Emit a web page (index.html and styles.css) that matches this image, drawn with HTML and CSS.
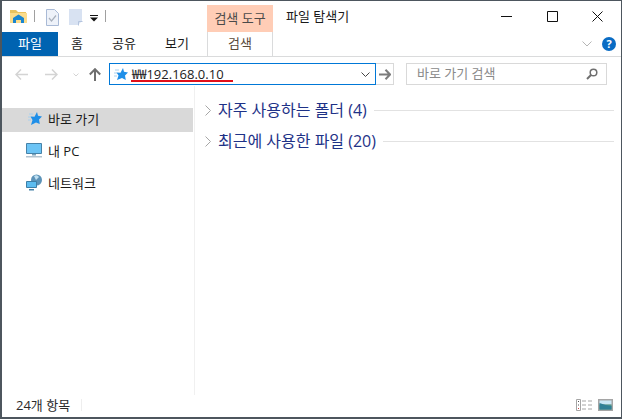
FILE: index.html
```html
<!DOCTYPE html>
<html lang="ko">

<head>
    <meta charset="utf-8">
    <title>파일 탐색기</title>
    <link rel="stylesheet" href="styles.css">
</head>

<body>
    <div class="window">

        <header class="titlebar">
            <div class="quick">
                <svg class="ico-folder" width="17" height="15" viewBox="0 0 17 15">
                    <path d="M0 1h6l2 2h8v2H0z" fill="#e8c25e" />
                    <path d="M0 4h17v10H0z" fill="#fbdc8c" />
                    <path d="M3 14V9l5.500-3.500L14 9v5h-3v-3H6v3z" fill="#1a86d0" />
                </svg>
                <span class="qsep sep-a"></span>
                <svg class="ico-doc" width="13" height="17" viewBox="0 0 13 17">
                    <path d="M.5.500h8l4 4v12H.5z" fill="#eef2f9" stroke="#a9bad6" />
                    <path d="M3 9l2.500 3L10 6.500" fill="none" stroke="#a8b0bc" stroke-width="1.200" />
                </svg>
                <svg class="ico-blank" width="14" height="17" viewBox="0 0 14 17">
                    <path d="M0 0h13v12l-4 4H0z" fill="#d8e2f2" />
                    <path d="M9.500 16.500v-4h4" fill="none" stroke="#b4c4de" />
                </svg>
                <svg class="ico-drop" width="8" height="7" viewBox="0 0 8 7">
                    <path d="M0 0h8v1H0zM0 2.500h8L4 6.500z" fill="#111" />
                </svg>
                <span class="qsep sep-b"></span>
            </div>
            <div class="ctx-title">검색 도구</div>
            <div class="app-title">파일 탐색기</div>
            <div class="winbtns">
                <svg width="11" height="11" viewBox="0 0 11 11">
                    <path d="M0 5.500h11" stroke="#111" />
                </svg>
                <svg width="11" height="11" viewBox="0 0 11 11">
                    <path d="M.5.500h10v10H.5z" fill="none" stroke="#111" />
                </svg>
                <svg width="11" height="11" viewBox="0 0 11 11">
                    <path d="M.5.500l10 10M10.500.500l-10 10" stroke="#111" />
                </svg>
            </div>
        </header>

        <nav class="tabs">
            <div class="tab tab-file">파일</div>
            <div class="tab tab-home">홈</div>
            <div class="tab tab-share">공유</div>
            <div class="tab tab-view">보기</div>
            <div class="tab tab-search">검색</div>
            <svg class="ico-collapse" width="10" height="6" viewBox="0 0 10 6">
                <path d="M.5.500L5 5 9.500.500" fill="none" stroke="#b5b5b5" />
            </svg>
            <div class="help">?</div>
        </nav>

        <section class="addressbar">
            <svg class="nav-arrow" width="13" height="11" viewBox="0 0 13 11">
                <path d="M6 .500L1 5.500l5 5M1 5.500h12" fill="none" stroke="#d4d4d4" stroke-width="1.500" />
            </svg>
            <svg class="nav-arrow arrow-fwd" width="13" height="11" viewBox="0 0 13 11">
                <path d="M7 .500l5 5-5 5M12 5.500H0" fill="none" stroke="#d4d4d4" stroke-width="1.500" />
            </svg>
            <svg class="nav-recent" width="6" height="4" viewBox="0 0 6 4">
                <path d="M.5.500L3 3 5.500.500" fill="none" stroke="#d4d4d4" />
            </svg>
            <svg class="nav-up" width="12" height="13" viewBox="0 0 12 13">
                <path d="M.8 6.500L6 1.200l5.200 5.300M6 1.500V13" fill="none" stroke="#6f6f6f" stroke-width="2" />
            </svg>

            <div class="addr">
                <svg class="star" width="14" height="12" viewBox="0 0 14 12">
                    <path d="M9 0l1 3.800 4 .7-3 3 .8 4.500L8 10l-5 2 1.500-4.500L2.500 4.500l4 .2z" fill="#1f8fe8" />
                    <path d="M1 2h4M0 5h3M0 8h3" stroke="#a8d0ee" />
                </svg>
                <span class="addr-text">₩₩192.168.0.10</span>
                <span class="redline"></span>
                <svg class="addr-drop" width="9" height="5" viewBox="0 0 9 5">
                    <path d="M.5.500l4 4 4-4" fill="none" stroke="#444" />
                </svg>
            </div>
            <div class="go">
                <svg width="12" height="11" viewBox="0 0 12 11">
                    <path d="M6.500.800l4.500 4.700-4.500 4.700M11 5.500H0" fill="none" stroke="#7c7c7c" stroke-width="2" />
                </svg>
            </div>
            <div class="searchbox">
                <span class="placeholder">바로 가기 검색</span>
                <svg width="12" height="12" viewBox="0 0 12 12">
                    <circle cx="7.500" cy="4.500" r="3.300" fill="none" stroke="#6f6f6f" stroke-width="1.500" />
                    <path d="M5 7L1 11" stroke="#6f6f6f" stroke-width="2" />
                </svg>
            </div>
        </section>

        <main class="content">
            <aside class="sidebar">
                <div class="side-item active">
                    <svg class="side-ico" width="16" height="13" viewBox="0 0 16 13">
                        <path d="M11 0l1 3.800 4 .7-3 3 .8 4.500L10 10.500l-5 2.500 1.500-5L4.500 4.500l4 .2z" fill="#1f8fe8" />
                        <path d="M3 2h4M2 5h3M2 8h3" stroke="#a8d0ee" />
                    </svg>
                    <span>바로 가기</span>
                </div>
                <div class="side-item">
                    <svg class="side-ico" width="16" height="15" viewBox="0 0 16 15">
                        <path d="M.5.500h15v10H.5z" fill="#6cc4f5" stroke="#4682a8" />
                        <path d="M6 11h4v1.500H6z" fill="#7da3bb" />
                        <path d="M0 13h16v1.500H0z" fill="#b3c3cf" />
                    </svg>
                    <span>내 PC</span>
                </div>
                <div class="side-item">
                    <svg class="side-ico" width="16" height="17" viewBox="0 0 16 17">
                        <circle cx="10.500" cy="6" r="5.500" fill="#5c93b8" />
                        <path d="M8 2q3-2 5 1l-3 3z" fill="#bfe0f2" />
                        <path d="M.5 7.500h10v6H.5z" fill="#5cbcf0" stroke="#3d7ea6" />
                        <path d="M3 15h5v1.500H3z" fill="#4682a8" />
                    </svg>
                    <span>네트워크</span>
                </div>
            </aside>

            <div class="groups">
                <div class="group">
                    <svg width="6" height="11" viewBox="0 0 6 11">
                        <path d="M.5.500l5 5-5 5" fill="none" stroke="#a6a6a6" />
                    </svg>
                    <span class="group-name">자주 사용하는 폴더 (4)</span>
                    <span class="group-line"></span>
                </div>
                <div class="group">
                    <svg width="6" height="11" viewBox="0 0 6 11">
                        <path d="M.5.500l5 5-5 5" fill="none" stroke="#a6a6a6" />
                    </svg>
                    <span class="group-name">최근에 사용한 파일 (20)</span>
                    <span class="group-line"></span>
                </div>
            </div>
        </main>

        <footer class="statusbar">
            <span class="count">24개 항목</span>
            <span class="status-sep"></span>
            <svg class="view-details" width="16" height="12" viewBox="0 0 16 12">
                <path d="M.5.500h4v11h-4z" fill="#fff" stroke="#a5a5a5" />
                <path d="M2 2h1v1H2zM2 5.500h1v1H2z" fill="#555" />
                <path d="M2 9h1v1H2z" fill="#c44" />
                <path d="M6 2h4M12 2h4M6 6h4M12 6h4M6 10h4M12 10h4" stroke="#a5a5a5" />
            </svg>
            <svg class="view-thumb" width="15" height="12" viewBox="0 0 15 12">
                <path d="M0 0h15v12H0z" fill="#a5a5a5" />
                <path d="M1.500 1.500h12v4h-12z" fill="#c9e6f5" />
                <path d="M1.500 5.500h12v5h-12z" fill="#4f9a8c" />
                <path d="M1.500 4l6 2 6 1v3.500h-12z" fill="#2f7f95" />
            </svg>
        </footer>

    </div>
</body>

</html>
```

FILE: styles.css
```css
* {
    box-sizing: border-box;
}

html,
body {
    margin: 0;
    padding: 0;
}

body {
    background-color: #fff;
    font-family: 'Open Sans', 'Noto Sans CJK KR', sans-serif;
    font-size: 13px;
    color: #1a1a1a;
}

svg {
    display: block;
    flex: none;
}

.window {
    width: 622px;
    height: 419px;
    border: 1px solid #4d565e;
    border-width: 1px 1px 2px 2px;
    background-color: #fff;
    display: flex;
    flex-direction: column;
    overflow: hidden;
}

/* title row */

.titlebar {
    height: 31px;
    display: flex;
    align-items: flex-start;
    flex: none;
}

.quick {
    width: 205px;
    display: flex;
    align-items: flex-start;
    flex: none;
}

.ico-folder {
    margin: 8px 0 0 8px;
}

.qsep {
    width: 1px;
    height: 12px;
    margin-top: 9px;
    background-color: #a0a0a0;
}

.sep-a {
    margin-left: 7px;
}

.sep-b {
    margin-left: 7px;
}

.ico-doc {
    margin: 8px 0 0 11px;
}

.ico-blank {
    margin: 8px 0 0 10px;
}

.ico-drop {
    margin: 14px 0 0 7px;
}

.ctx-title {
    width: 66px;
    height: 27px;
    margin-top: 4px;
    background-color: #ffcdb6;
    color: #4a4a4a;
    text-align: center;
    line-height: 27px;
    flex: none;
}

.app-title {
    margin-left: 13px;
    margin-top: 6px;
    line-height: 18px;
    flex: 1;
}

.winbtns {
    width: 102px;
    margin-right: 18px;
    margin-top: 10px;
    display: flex;
    justify-content: space-between;
    flex: none;
}

/* ribbon tabs */

.tabs {
    display: flex;
    align-items: center;
    border-bottom: 1px solid #dadbdc;
    flex: none;
    height: 25px;
}

.tab {
    text-align: center;
    line-height: 23px;
    height: 24px;
}

.tab-file {
    width: 56px;
    background-color: #0063b1;
    color: #fff;
}

.tab-home {
    width: 38px;
}

.tab-share {
    width: 56px;
}

.tab-view {
    width: 50px;
}

.tab-search {
    width: 66px;
    margin-left: 5px;
    color: #5a4a3a;
    border: 1px solid #dadbdc;
    border-width: 0 1px;
}

.ico-collapse {
    margin-left: 309px;
}

.help {
    width: 14px;
    height: 14px;
    margin-left: 10px;
    border-radius: 50%;
    background-color: #0a6cc4;
    color: #fff;
    font-size: 11px;
    font-weight: bold;
    line-height: 14px;
    text-align: center;
}

/* address row */

.addressbar {
    height: 29px;
    padding-top: 6px;
    display: flex;
    align-items: flex-start;
    flex: none;
}

.nav-arrow {
    margin: 6px 0 0 13px;
}

.arrow-fwd {
    margin-left: 17px;
}

.nav-recent {
    margin: 10px 0 0 15px;
}

.nav-up {
    margin: 5px 0 0 10px;
}

.addr {
    position: relative;
    width: 267px;
    height: 22px;
    margin-left: 8px;
    padding-left: 4px;
    border: 1px solid #0078d7;
    display: flex;
    align-items: center;
    flex: none;
}

.addr-text {
    margin-left: 4px;
    line-height: 20px;
    color: #222;
}

.redline {
    position: absolute;
    left: 21px;
    top: 16px;
    width: 102px;
    height: 2px;
    background-color: #e0101a;
}

.addr-drop {
    margin-left: auto;
    margin-right: 5px;
}

.go {
    width: 18px;
    height: 22px;
    border: 1px solid #d9d9d9;
    border-left: 0;
    display: flex;
    align-items: center;
    justify-content: center;
    flex: none;
}

.searchbox {
    width: 201px;
    height: 22px;
    margin-left: 12px;
    padding: 0 8px 0 10px;
    border: 1px solid #d9d9d9;
    display: flex;
    align-items: center;
    justify-content: space-between;
    flex: none;
}

.placeholder {
    color: #8a8a8a;
    margin-bottom: 3px;
}

/* sidebar + groups */

.content {
    flex: 1;
    display: flex;
    min-height: 0;
}

.sidebar {
    width: 193px;
    padding-top: 22px;
    border-right: 1px solid #f0f0f0;
    flex: none;
}

.side-item {
    height: 24px;
    margin-bottom: 8px;
    padding-left: 24px;
    padding-bottom: 3px;
    display: flex;
    align-items: center;
    gap: 6px;
    margin-right: 1px;
}

.side-item.active {
    background-color: #d9d9d9;
}

.groups {
    flex: 1;
    padding: 9px 7px 0 10px;
}

.group {
    height: 31px;
    display: flex;
    align-items: center;
}

.group-name {
    margin-left: 7px;
    padding-bottom: 4px;
    font-size: 16px;
    color: #1e3287;
    white-space: nowrap;
}

.group-line {
    flex: 1;
    height: 1px;
    margin-left: 7px;
    background-color: #e2e2e2;
}

/* status bar */

.statusbar {
    height: 22px;
    padding-left: 14px;
    padding-bottom: 3px;
    display: flex;
    align-items: center;
    flex: none;
    color: #2b2b2b;
}

.count {
    width: 65px;
}

.status-sep {
    width: 1px;
    height: 12px;
    background-color: #eee;
}

.view-details {
    margin-left: auto;
}

.view-thumb {
    margin-left: 6px;
    margin-right: 8px;
}
```
